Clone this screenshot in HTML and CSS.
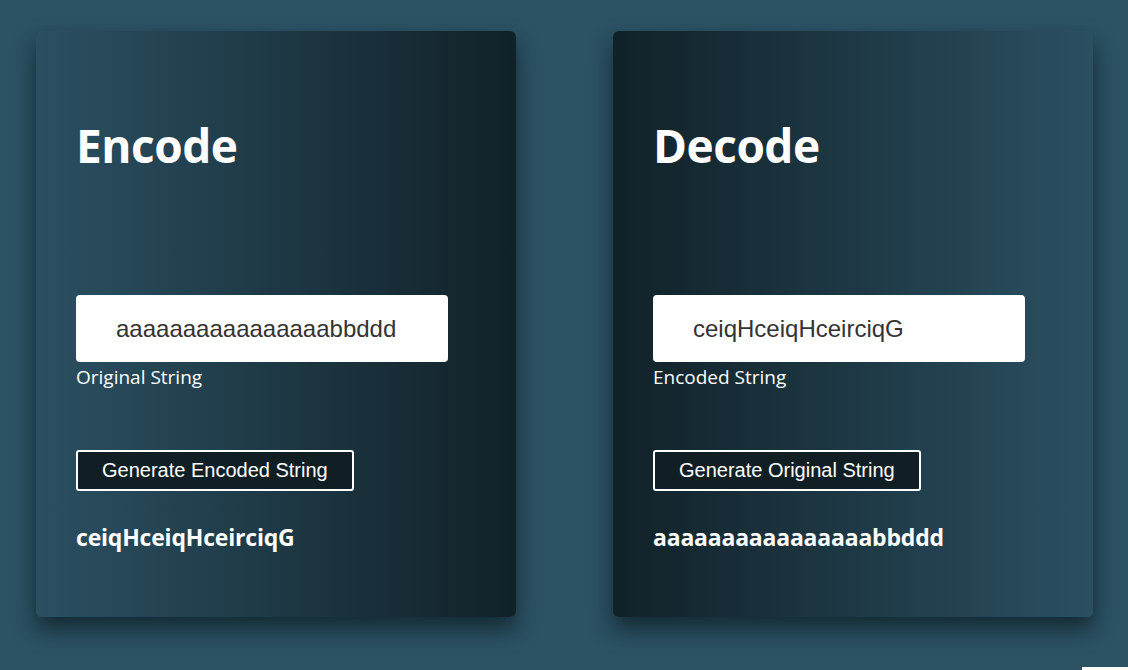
FILE: index.html
```html
<!DOCTYPE html>
<html>
<head>
<meta charset="utf-8">
<link rel="stylesheet" href="styles.css">
</head>
<body>
<main class="page">
  <section class="card card-encode">
    <h1 class="title">Encode</h1>
    <div class="field">
      <input class="text-input" type="text" value="aaaaaaaaaaaaaaaabbddd">
      <label class="label">Original String</label>
    </div>
    <button class="btn">Generate Encoded String</button>
    <p class="result">ceiqHceiqHceirciqG</p>
  </section>
  <section class="card card-decode">
    <h1 class="title">Decode</h1>
    <div class="field">
      <input class="text-input" type="text" value="ceiqHceiqHceirciqG">
      <label class="label">Encoded String</label>
    </div>
    <button class="btn">Generate Original String</button>
    <p class="result">aaaaaaaaaaaaaaaabbddd</p>
  </section>
</main>
<div class="corner"></div>
</body>
</html>
```

FILE: styles.css
```css
html, body {
  margin: 0;
  padding: 0;
}
body {
  background: #2c5264;
  height: 670px;
  overflow: hidden;
  position: relative;
  font-family: "Open Sans", "Noto Sans", sans-serif;
}
.page {
  display: flex;
  gap: 97px;
  padding: 31px 0 0 36px;
}
.card {
  width: 480px;
  height: 586px;
  box-sizing: border-box;
  padding: 0 40px;
  border-radius: 6px;
  box-shadow: 0 12px 22px rgba(10, 25, 32, 0.7);
  display: flex;
  flex-direction: column;
  color: #fff;
}
.card-encode {
  background: linear-gradient(to right, #2b5062 0%, #1b343f 60%, #112128 100%);
}
.card-decode {
  background: linear-gradient(to left, #2b5062 0%, #1b343f 60%, #112128 100%);
}
.title {
  margin: 86px 0 0 0;
  font-size: 46px;
  font-weight: 700;
  line-height: 56px;
  letter-spacing: -0.5px;
}
.field {
  margin-top: 122px;
  display: flex;
  flex-direction: column;
}
.text-input {
  width: 372px;
  height: 67px;
  box-sizing: border-box;
  border: none;
  border-radius: 4px;
  padding: 0 40px;
  font-family: "Liberation Sans", Arial, sans-serif;
  font-size: 24px;
  color: #333;
  background: #fff;
  outline: none;
}
.label {
  margin-top: 2px;
  font-size: 19px;
  line-height: 26px;
  color: #fff;
}
.btn {
  align-self: flex-start;
  margin-top: 60px;
  height: 41px;
  padding: 0 24px;
  background: #111f25;
  border: 2px solid #fff;
  border-radius: 3px;
  color: #fff;
  font-family: "Liberation Sans", Arial, sans-serif;
  font-size: 20px;
}
.result {
  margin: 30px 0 0 0;
  font-size: 23px;
  font-weight: 700;
  line-height: 32px;
  letter-spacing: -0.2px;
}
.corner {
  position: absolute;
  right: 0;
  bottom: 0;
  width: 46px;
  height: 3px;
  background: #fff;
}
```
